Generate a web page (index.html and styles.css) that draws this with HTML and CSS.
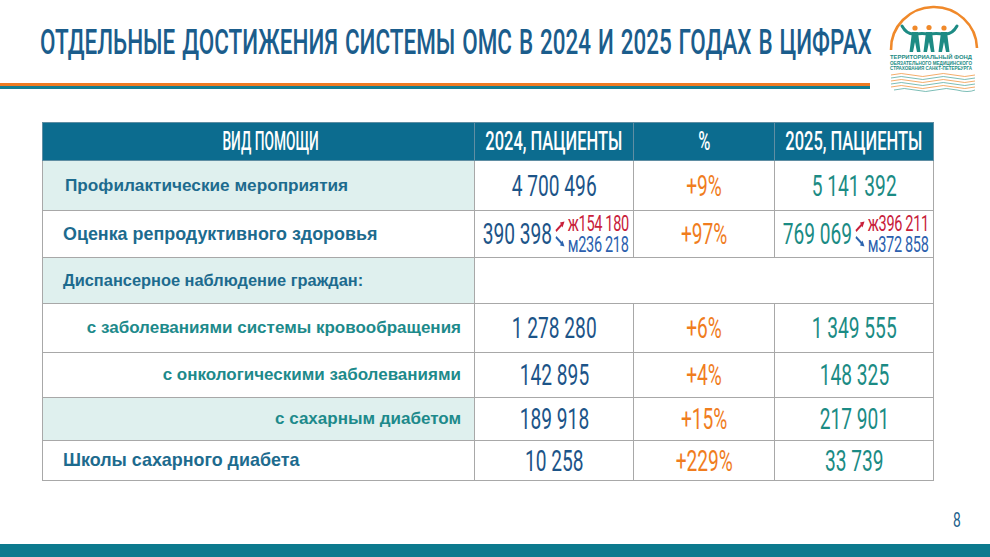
FILE: index.html
```html
<!DOCTYPE html>
<html lang="ru">
<head>
<meta charset="utf-8">
<title>ОМС в цифрах</title>
<link rel="stylesheet" href="styles.css">
</head>
<body>
<div class="slide">
  <header class="top">
    <div class="top-left">
      <div class="title"><h1 class="title-text">ОТДЕЛЬНЫЕ ДОСТИЖЕНИЯ СИСТЕМЫ ОМС В 2024 И 2025 ГОДАХ В ЦИФРАХ</h1></div>
      <div class="rule rule-o"></div>
      <div class="rule rule-t"></div>
    </div>
    <svg class="logo" viewBox="0 0 100 92" width="100" height="92">
      <path d="M5 45 A43 42 0 0 1 91 43" fill="none" stroke="#f0892a" stroke-width="2.6"/>
      <path d="M16 21 Q21 30 29 29 Q36 28 43 29 Q50 28 58 29 Q66 30 71 21" fill="none" stroke="#1d8b84" stroke-width="3" stroke-linecap="round"/>
      <path d="M26 27 L32 27 L34.5 47 L31 47 L29 37 L27 47 L23.5 47 Z" fill="#1d8b84"/>
      <path d="M40 27 L46 27 L48.5 47 L45 47 L43 37 L41 47 L37.5 47 Z" fill="#1d8b84"/>
      <path d="M55 27 L61 27 L63.5 47 L60 47 L58 37 L56 47 L52.5 47 Z" fill="#1d8b84"/>
      <circle cx="29" cy="23" r="2.6" fill="#f0892a"/>
      <circle cx="43" cy="22.5" r="2.6" fill="#f0892a"/>
      <circle cx="58" cy="23" r="2.6" fill="#f0892a"/>
      <text class="logo-txt" x="4" y="54" textLength="82" lengthAdjust="spacingAndGlyphs">ТЕРРИТОРИАЛЬНЫЙ  ФОНД</text>
      <text class="logo-txt" x="4" y="59.5" textLength="82" lengthAdjust="spacingAndGlyphs">ОБЯЗАТЕЛЬНОГО МЕДИЦИНСКОГО</text>
      <text class="logo-txt" x="4" y="65" textLength="82" lengthAdjust="spacingAndGlyphs">СТРАХОВАНИЯ САНКТ-ПЕТЕРБУРГА</text>
      <g fill="none" stroke-width="0.9">
        <path d="M5 70 q10 -3 21 0 t21 0 t21 0 t21 0" stroke="#f3a45a"/>
        <path d="M5 73 q10 -3 21 0 t21 0 t21 0 t21 0" stroke="#6db5ae"/>
        <path d="M5 76 q10 -3 21 0 t21 0 t21 0 t21 0" stroke="#f3a45a"/>
        <path d="M5 79 q10 -3 21 0 t21 0 t21 0 t21 0" stroke="#6db5ae"/>
        <path d="M5 82 q10 -3 21 0 t21 0 t21 0 t21 0" stroke="#f3a45a"/>
        <path d="M8 85 q10 -3 21 0 t21 0 t21 0 t18 0" stroke="#6db5ae"/>
      </g>
    </svg>
  </header>

  <main class="table-wrap">
    <table class="grid">
      <colgroup><col class="c1"><col class="c2"><col class="c3"><col class="c4"></colgroup>
      <thead>
        <tr>
          <th><div class="cell"><span class="cond head-l">ВИД ПОМОЩИ</span></div></th>
          <th><div class="cell"><span class="cond">2024, ПАЦИЕНТЫ</span></div></th>
          <th><div class="cell"><span class="cond">%</span></div></th>
          <th><div class="cell"><span class="cond">2025, ПАЦИЕНТЫ</span></div></th>
        </tr>
      </thead>
      <tbody>
        <tr class="h50">
          <td class="lbl shade first">Профилактические мероприятия</td>
          <td><div class="cell"><span class="cond num y24">4 700 496</span></div></td>
          <td><div class="cell"><span class="cond num pct">+9%</span></div></td>
          <td><div class="cell"><span class="cond num y25">5 141 392</span></div></td>
        </tr>
        <tr class="h47">
          <td class="lbl big">Оценка репродуктивного здоровья</td>
          <td><div class="cell"><span class="cond split y24"><span class="num">390 398</span><svg class="arr" viewBox="0 0 16 32" width="16" height="32"><path d="M2 13 L11 6.5" stroke="#c8203a" stroke-width="2.4"/><path d="M15 3.5 L8.2 4.6 L12 9.6 Z" fill="#c8203a"/><path d="M2 19 L11 25.5" stroke="#2c63ae" stroke-width="2.4"/><path d="M15 28.5 L8.2 27.4 L12 22.4 Z" fill="#2c63ae"/></svg><span class="subs"><span class="f">ж154 180</span><span class="m">м236 218</span></span></span></div></td>
          <td><div class="cell"><span class="cond num pct">+97%</span></div></td>
          <td><div class="cell"><span class="cond split y25"><span class="num">769 069</span><svg class="arr" viewBox="0 0 16 32" width="16" height="32"><path d="M2 13 L11 6.5" stroke="#c8203a" stroke-width="2.4"/><path d="M15 3.5 L8.2 4.6 L12 9.6 Z" fill="#c8203a"/><path d="M2 19 L11 25.5" stroke="#2c63ae" stroke-width="2.4"/><path d="M15 28.5 L8.2 27.4 L12 22.4 Z" fill="#2c63ae"/></svg><span class="subs"><span class="f">ж396 211</span><span class="m">м372 858</span></span></span></div></td>
        </tr>
        <tr class="h46">
          <td class="lbl shade small">Диспансерное наблюдение граждан:</td>
          <td colspan="3"></td>
        </tr>
        <tr class="h49">
          <td class="lbl sub">с заболеваниями системы кровообращения</td>
          <td><div class="cell"><span class="cond num y24">1 278 280</span></div></td>
          <td><div class="cell"><span class="cond num pct">+6%</span></div></td>
          <td><div class="cell"><span class="cond num y25">1 349 555</span></div></td>
        </tr>
        <tr class="h45">
          <td class="lbl sub">с онкологическими заболеваниями</td>
          <td><div class="cell"><span class="cond num y24">142 895</span></div></td>
          <td><div class="cell"><span class="cond num pct">+4%</span></div></td>
          <td><div class="cell"><span class="cond num y25">148 325</span></div></td>
        </tr>
        <tr class="h43">
          <td class="lbl sub shade">с сахарным диабетом</td>
          <td><div class="cell"><span class="cond num y24">189 918</span></div></td>
          <td><div class="cell"><span class="cond num pct">+15%</span></div></td>
          <td><div class="cell"><span class="cond num y25">217 901</span></div></td>
        </tr>
        <tr class="h40">
          <td class="lbl big">Школы сахарного диабета</td>
          <td><div class="cell"><span class="cond num y24">10 258</span></div></td>
          <td><div class="cell"><span class="cond num pct">+229%</span></div></td>
          <td><div class="cell"><span class="cond num y25">33 739</span></div></td>
        </tr>
      </tbody>
    </table>
  </main>

  <footer class="foot">
    <div class="page-num"><span class="cond">8</span></div>
    <div class="bar"></div>
  </footer>
</div>
</body>
</html>
```

FILE: styles.css
```css
html, body {
  margin: 0;
  padding: 0;
  background: #ffffff;
}

.slide {
  width: 990px;
  height: 557px;
  display: flex;
  flex-direction: column;
  overflow: hidden;
  font-family: "Liberation Sans", Arial, sans-serif;
}

/* ---------- header ---------- */
.top {
  display: flex;
  align-items: flex-start;
  height: 96px;
  flex: none;
}

.top-left {
  width: 870px;
  flex: none;
  display: flex;
  flex-direction: column;
}

.title {
  height: 83px;
  padding-left: 40px;
  padding-top: 2px;
  box-sizing: border-box;
  display: flex;
  align-items: center;
  white-space: nowrap;
  overflow: visible;
}

.title-text {
  margin: 0;
  display: inline-block;
  flex: none;
  font-family: Roboto, "Liberation Sans", sans-serif;
  font-weight: 500;
  font-size: 35px;
  line-height: 35px;
  color: #1b5d8c;
  word-spacing: 2px;
  transform: scaleX(0.642);
  transform-origin: left center;
}

.rule {
  height: 3px;
}
.rule-o { background: #ee7b22; }
.rule-t { background: #137e93; }

.logo {
  margin-top: 5px;
  margin-left: 16px;
  flex: none;
}

.logo-txt {
  font-family: "Liberation Sans", Arial, sans-serif;
  font-weight: 700;
  font-size: 5.2px;
  fill: #1d8b84;
}

/* ---------- table ---------- */
.table-wrap {
  margin: 26px 0 0 42px;
  flex: none;
}

.grid {
  width: 891px;
  table-layout: fixed;
  border-collapse: collapse;
  border: 1px solid #a8a8a8;
}

.c1 { width: 432px; }
.c2 { width: 159px; }
.c3 { width: 141px; }
.c4 { width: 159px; }

.grid th,
.grid td {
  border: 1px solid #a8a8a8;
  padding: 0;
  vertical-align: middle;
  overflow: visible;
}

.grid thead tr { height: 38px; }

.grid th {
  background: #0c6c8f;
  color: #ffffff;
  font-family: Roboto, "Liberation Sans", sans-serif;
  font-weight: 500;
  font-size: 25px;
  border-color: #5f8ea3;
}

.h50 { height: 50px; }
.h47 { height: 47px; }
.h46 { height: 46px; }
.h49 { height: 49px; }
.h45 { height: 45px; }
.h43 { height: 43px; }
.h40 { height: 40px; }

.cell {
  display: flex;
  justify-content: center;
  align-items: center;
  white-space: nowrap;
}

.cond {
  flex: none;
  display: inline-block;
  white-space: nowrap;
  transform: scaleX(0.66);
  transform-origin: center center;
}

.cond.head-l {
  margin-left: 24px;
  transform: scaleX(0.55);
}

.lbl {
  font-family: "Liberation Sans", Arial, sans-serif;
  font-weight: 700;
  font-size: 17px;
  color: #1d6b8e;
  padding-left: 20px !important;
  white-space: nowrap;
}

.lbl.first {
  padding-left: 22px !important;
  font-size: 17.2px;
}

.lbl.big {
  font-size: 17.9px;
}

.lbl.small {
  font-size: 16.4px;
}

.lbl.sub {
  text-align: right;
  padding-left: 0 !important;
  padding-right: 13px !important;
  color: #1d8a8b;
}

.shade {
  background: #dff0ee;
}

.num {
  font-family: Roboto, "Liberation Sans", sans-serif;
  font-weight: 400;
  font-size: 29px;
  line-height: 30px;
}

.y24 { color: #1c5488; }
.pct { color: #f07d1e; }
.y25 { color: #1b8b84; }

.split {
  display: inline-flex;
  align-items: center;
  gap: 4px;
  margin-left: 4px;
}

.arr {
  flex: none;
  display: block;
}

.subs {
  display: flex;
  flex-direction: column;
  font-family: Roboto, "Liberation Sans", sans-serif;
  font-size: 22px;
  line-height: 21px;
  letter-spacing: -0.5px;
}

.subs .f { color: #c8203a; }
.subs .m { color: #2c5fae; }

/* ---------- footer ---------- */
.foot {
  margin-top: auto;
  display: flex;
  flex-direction: column;
}

.page-num {
  display: flex;
  justify-content: flex-end;
  padding-right: 27px;
  font-family: Roboto, "Liberation Sans", sans-serif;
  font-size: 21px;
  line-height: 24px;
  color: #1d5f8c;
  margin-bottom: 12px;
}

.bar {
  height: 13px;
  background: #0c7a8e;
}
```
